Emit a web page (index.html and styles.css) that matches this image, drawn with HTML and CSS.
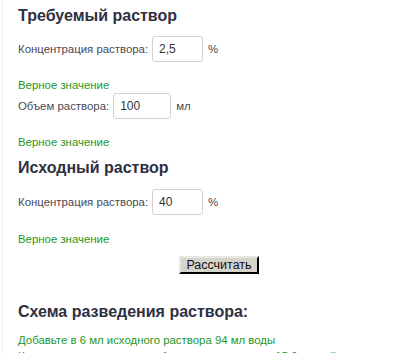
FILE: index.html
```html
<!DOCTYPE html>
<html lang="ru">
<head>
  <meta charset="UTF-8" />
  <title>Разведение раствора</title>
  <link rel="stylesheet" href="styles.css">
</head>
<body>
  <div class="page">
    <h2 class="first">Требуемый раствор</h2>

    <div class="row r1">
      <label>Концентрация раствора:</label>
      <input type="text" class="num" id="conc" value="2,5" />
      <span>%</span>
    </div>
    <div class="ok">Верное значение</div>

    <div class="row r2">
      <label>Объем раствора:</label>
      <input type="text" class="num wide" id="volume" value="100" />
      <span>мл</span>
    </div>
    <div class="ok">Верное значение</div>

    <h2 class="second">Исходный раствор</h2>

    <div class="row r3">
      <label>Концентрация раствора:</label>
      <input type="text" class="num" id="source" value="40" />
      <span>%</span>
    </div>
    <div class="ok ok3">Верное значение</div>

    <div class="btnrow">
      <button type="button">Рассчитать</button>
    </div>

    <h2 class="third">Схема разведения раствора:</h2>
    <div class="ok res">Добавьте в 6 мл исходного раствора 94 мл воды</div>
    <div class="ok res2">Концентрация исходного в 1 мл раствора равна 15,0 частей</div>
  </div>
</body>
</html>
```

FILE: styles.css
```css
body { margin: 0; font-family: "Liberation Sans", Arial, sans-serif; font-size: 11.4px; color: #4a4a55; background: #fff; overflow: hidden; }
.page { margin-left: 2px; border-left: 1px solid #ececec; padding-left: 15px; height: 400px; }
h2 { margin: 0; font-size: 16px; line-height: 20px; color: #2f3142; }
h2.first { padding-top: 6px; }
h2.second { margin-top: 9px; }
h2.third { margin-top: 28px; }
.row { display: flex; align-items: center; gap: 4px; height: 26px; }
.r1 { margin-top: 10px; }
.r2 { margin-top: 1px; }
.r3 { margin-top: 11px; }
.row span { margin-left: 1px; }
input.num { box-sizing: border-box; width: 51px; height: 26px; border: 1px solid #d2d2d2; border-radius: 3px; padding: 0 6px; font: 12px "Liberation Sans", Arial, sans-serif; color: #333; }
input.wide { width: 58px; }
.ok { color: #1e961e; line-height: 14px; margin-top: 16px; }
.ok3 { margin-top: 17px; }
.res { margin-top: 11px; }
.res2 { margin-top: 2px; }
.btnrow { margin-top: 10px; padding-left: 161px; }
button { height: 18px; width: 80px; padding: 0; font: 12.5px "Liberation Sans", Arial, sans-serif; color: #111; background: #d6d3cc; border: 2px outset #e8e6e0; border-right-color: #555; border-bottom-color: #555; }
```
